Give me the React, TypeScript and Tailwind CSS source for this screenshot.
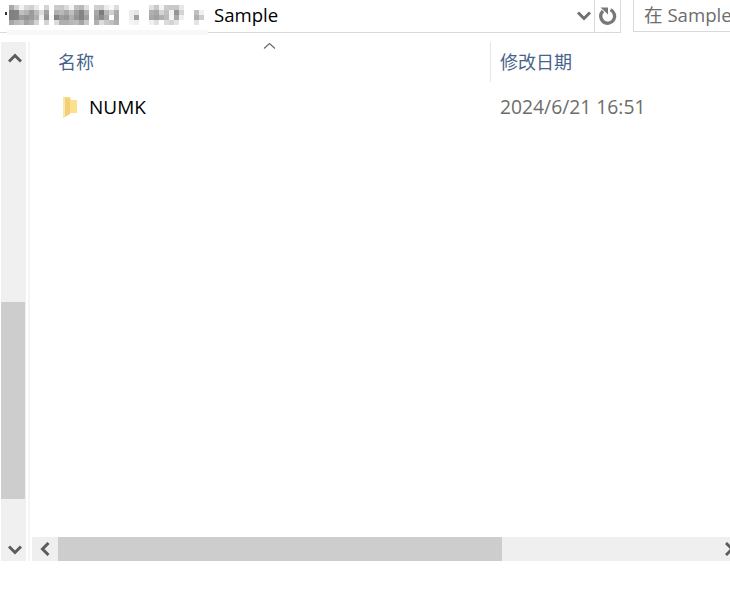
const UI_FONT = 'font-["Open_Sans","Noto_Sans_CJK_SC",sans-serif]'

// blurred part of the breadcrumb: [x, gray per row]
const MOSAIC: [number, string[]][] = [
  [9, ['a8', '80', '80', 'a8']],
  [14, ['d0', '84', '84', 'b8']],
  [19, ['f2', 'c0', '9c', 'c0']],
  [24, ['d8', 'b4', '94', 'a4']],
  [29, ['d0', '9c', '9c', 'b0']],
  [34, ['ea', 'bc', 'b0', 'd4']],
  [39, ['ff', 'dc', 'f0', 'ff']],
  [44, ['d4', 'a0', '94', 'd4']],
  [49, ['ff', 'ff', 'f8', 'ff']],
  [54, ['cc', 'b0', '84', 'dc']],
  [59, ['c8', 'b8', '9c', 'b0']],
  [64, ['dc', 'a8', '94', 'b0']],
  [69, ['f4', 'c0', 'b0', 'b8']],
  [74, ['c0', '9c', '94', 'bc']],
  [79, ['b8', '84', '84', 'a4']],
  [84, ['e0', 'b0', 'a0', 'c8']],
  [94, ['d0', 'a8', 'a0', 'b0']],
  [99, ['cc', '7c', '8c', 'dc']],
  [104, ['ec', 'b8', 'a8', 'c8']],
  [109, ['f8', 'd0', 'ff', 'c0']],
  [114, ['dc', 'ac', 'a8', 'b0']],
  [129, ['ff', 'ec', 'ec', 'f4']],
  [134, ['ff', 'e4', 'a0', 'f0']],
  [149, ['e0', 'b0', 'a8', 'f0']],
  [154, ['c8', 'a8', 'a0', 'e0']],
  [159, ['f4', 'd4', 'b0', 'ff']],
  [164, ['cc', 'c0', 'bc', 'dc']],
  [169, ['c8', 'f0', 'f4', 'd4']],
  [174, ['c8', '94', 'a8', 'e4']],
  [179, ['e8', 'd4', 'f0', 'ff']],
  [194, ['ff', 'c0', 'b0', 'e4']],
  [199, ['ff', 'f0', 'cc', 'ff']],
]

function BlurredPath() {
  return (
    <svg className="absolute left-0 top-0" width="210" height="36">
      <rect x="7" y="30" width="201" height="5" fill="#f8f8f8" />
      <rect x="5" y="12" width="2" height="3" fill="#333" />
      {MOSAIC.map(([x, col]) =>
        col.map((g, i) => (
          <rect key={`${x}-${i}`} x={x} y={5 + i * 5} width="5" height="5" fill={`#${g}${g}${g}`} />
        ))
      )}
    </svg>
  )
}

function Chevron({ d }: { d: string }) {
  return (
    <svg width="14" height="14" viewBox="0 0 14 14" className="block">
      <path d={d} fill="none" stroke="#5c5c5c" strokeWidth="3" />
    </svg>
  )
}

function TopBar() {
  return (
    <div className="flex h-[33px] shrink-0">
      <div className="relative flex w-[621px] items-center border-r border-b border-[#d9d9d9] pl-[214px]">
        <BlurredPath />
        <span className="relative mb-[2px] text-[18.6px] leading-[30px] text-black">Sample</span>
        <div className="ml-auto flex h-full items-center">
          <svg width="14" height="10" viewBox="0 0 14 10" className="mr-[3px]">
            <path d="M1 1.5 7 7.5l6-6" fill="none" stroke="#707070" strokeWidth="3" />
          </svg>
          <div className="flex h-full w-[26px] items-center justify-center border-l border-[#d9d9d9]">
            <svg width="20" height="20" viewBox="0 0 20 20">
              <path d="M12.5 3.8A7 7 0 1 1 5 5" fill="none" stroke="#787878" strokeWidth="3.4" />
              <path d="M2.5 1.5h7.5v7z" fill="#787878" />
            </svg>
          </div>
        </div>
      </div>
      <div className="ml-[12px] flex h-[32px] flex-1 items-center overflow-hidden border-b border-l border-[#d9d9d9] pb-[2px] pl-[10px]">
        <span className="whitespace-nowrap text-[18.6px] text-[#6d6d6d]">在 Sample</span>
      </div>
    </div>
  )
}

function VerticalScroll() {
  return (
    <div className="ml-[1px] flex h-[519px] w-[25px] shrink-0 flex-col bg-[#f0f0f0]">
      <div className="h-[260px] pt-[9px] pl-[7px]">
        <Chevron d="M1 10.5 7 4.5l6 6" />
      </div>
      <div className="mr-[1px] h-[197px] bg-[#cdcdcd]" />
      <div className="flex-1 pt-[44px] pl-[7px]">
        <Chevron d="M1 3.5 7 9.5l6-6" />
      </div>
    </div>
  )
}

function HorizontalScroll() {
  return (
    <div className="flex h-[24px] shrink-0 bg-[#efefef]">
      <div className="flex w-[26px] items-center pl-[6px]">
        <Chevron d="M10.5 1 4.5 7l6 6" />
      </div>
      <div className="h-full w-[444px] bg-[#cdcdcd]" />
      <div className="flex flex-1 items-center justify-end overflow-hidden">
        <div className="mr-[-9px]">
          <Chevron d="M1 1 7 7l-6 6" />
        </div>
      </div>
    </div>
  )
}

function FolderIcon() {
  return (
    <svg width="16" height="22" viewBox="0 0 16 22" className="shrink-0">
      <path d="M2 0h6l1 3h6v13H2z" fill="#f7d98b" />
      <path d="M8 3h7v13H8z" fill="#fbe08f" />
      <path d="M1 0l7 3v14l-7 4z" fill="#f3cf75" />
      <path d="M1 0l2 1v18l-2 2z" fill="#fae8b4" />
    </svg>
  )
}

export default function App() {
  return (
    <div className={`flex h-[598px] w-[730px] flex-col overflow-hidden bg-white ${UI_FONT}`}>
      <TopBar />
      <div className="flex pt-[9px]">
        <VerticalScroll />
        <div className="ml-[2px] h-[519px] w-[2px] shrink-0 bg-[#f5f5f5]" />
        <div className="ml-[2px] flex h-[519px] min-w-0 flex-1 flex-col">
          <div className="relative flex h-[40px] shrink-0">
            <svg width="13" height="8" viewBox="0 0 13 8" className="absolute left-[231px] top-[0px]">
              <path d="M1 6.5 6.5 1.5 12 6.5" fill="none" stroke="#666" strokeWidth="1.1" />
            </svg>
            <div className="w-[458px] pl-[26px] pt-[8px] text-[18px] leading-[25px] text-[#46648a]">名称</div>
            <div className="flex-1 border-l border-[#e5e5e5] pl-[9px] pt-[8px] text-[18px] leading-[25px] text-[#46648a]">修改日期</div>
          </div>
          <div className="flex h-[45px] shrink-0 items-center pt-[6px]">
            <div className="flex w-[459px] items-center pl-[30px]">
              <FolderIcon />
              <span className="ml-[11px] text-[19px] text-black">NUMK</span>
            </div>
            <span className="pl-[9px] text-[19.3px] whitespace-nowrap text-[#6d6d6d]">2024/6/21 16:51</span>
          </div>
          <div className="flex-1" />
          <HorizontalScroll />
        </div>
      </div>
    </div>
  )
}
